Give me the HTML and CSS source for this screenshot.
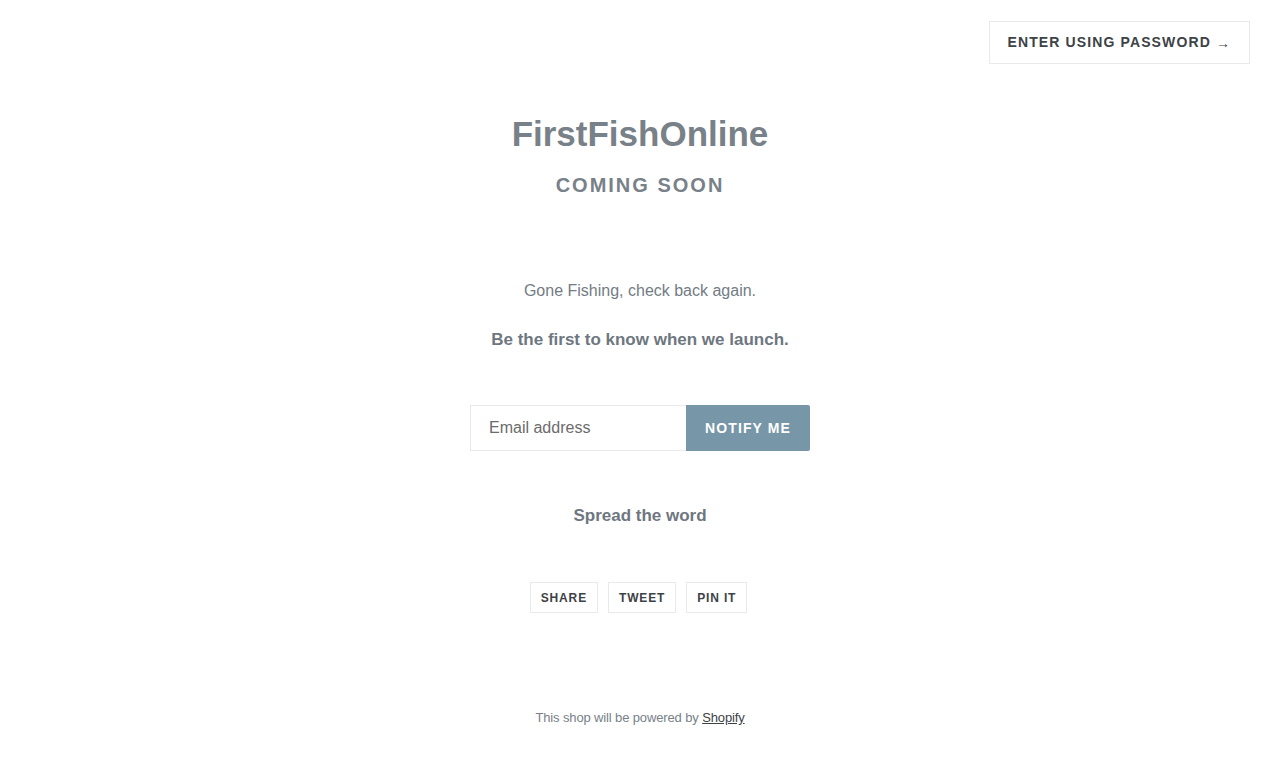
FILE: index.html
```html
<!DOCTYPE html>
<html lang="en">
<head>
<meta charset="utf-8">
<title>FirstFishOnline</title>
<link rel="stylesheet" href="styles.css">
</head>
<body>
<header class="top">
  <a class="pw-btn" href="#">Enter using password <span class="arrow">&rarr;</span></a>
</header>
<main class="main">
  <h1 class="title">FirstFishOnline</h1>
  <h2 class="soon">Coming Soon</h2>
  <p class="msg">Gone Fishing, check back again.</p>
  <p class="launch">Be the first to know when we launch.</p>
  <form class="signup">
    <input class="email" type="email" placeholder="Email address">
    <button class="notify" type="button">Notify me</button>
  </form>
  <p class="spread">Spread the word</p>
  <div class="share">
    <a class="share-btn" href="#">Share</a>
    <a class="share-btn" href="#">Tweet</a>
    <a class="share-btn" href="#">Pin it</a>
  </div>
</main>
<footer class="foot">This shop will be powered by <a href="#">Shopify</a></footer>
</body>
</html>
```
FILE: styles.css
```css
* { box-sizing: border-box; }
html, body { margin: 0; padding: 0; }
body {
  font-family: "Liberation Sans", Arial, sans-serif;
  color: #737c84;
  background: #fff;
  text-align: center;
}
.top {
  display: flex;
  justify-content: flex-end;
  padding: 21px 30px 0 0;
}
.pw-btn {
  display: inline-flex;
  align-items: center;
  height: 43px;
  padding: 0 18px;
  border: 1px solid #e8e9eb;
  color: #3d4246;
  text-decoration: none;
  font-weight: 700;
  font-size: 14px;
  line-height: 16px;
  padding-bottom: 1px;
  letter-spacing: 0.08em;
  text-transform: uppercase;
}
.arrow { margin-left: 5px; font-weight: 400; font-size: 14px; position: relative; top: 1px; }
.main {
  display: flex;
  flex-direction: column;
  align-items: center;
}
.title {
  margin: 50px 0 0;
  font-size: 35px;
  line-height: 40px;
  font-weight: 700;
  color: #788188;
}
.soon {
  margin: 19px 0 0;
  font-size: 20px;
  line-height: 24px;
  letter-spacing: 0.1em;
  text-transform: uppercase;
  font-weight: 700;
  color: #788188;
}
.msg {
  margin: 82px 0 0;
  font-size: 16px;
  line-height: 24px;
}
.launch {
  margin: 25px 0 0;
  font-size: 17px;
  line-height: 24px;
  font-weight: 700;
  color: #6e777f;
}
.signup {
  display: flex;
  margin: 53px 0 0;
}
.email {
  width: 216px;
  height: 46px;
  border: 1px solid #e8e9eb;
  border-right: 0;
  padding: 0 18px;
  font-family: inherit;
  font-size: 16px;
  color: #3d4246;
  outline: none;
}
.email::placeholder { color: #6b6b6b; }
.notify {
  width: 124px;
  height: 46px;
  border: 0;
  border-radius: 0 2px 2px 0;
  background: #7796a8;
  color: #fff;
  font-family: inherit;
  font-weight: 700;
  font-size: 14px;
  letter-spacing: 0.08em;
  text-transform: uppercase;
}
.spread {
  margin: 53px 0 0;
  font-size: 17px;
  line-height: 24px;
  font-weight: 700;
  color: #6e777f;
}
.share {
  display: flex;
  gap: 10px;
  margin: 54px 0 0;
  padding-right: 3px;
}
.share-btn {
  display: inline-flex;
  align-items: center;
  height: 31px;
  padding: 0 10px;
  border: 1px solid #e8e9eb;
  color: #3d4246;
  text-decoration: none;
  font-weight: 700;
  font-size: 12px;
  letter-spacing: 0.07em;
  text-transform: uppercase;
}
.foot {
  margin-top: 95px;
  font-size: 13px;
  line-height: 20px;
  letter-spacing: -0.01em;
  color: #788188;
}
.foot a { color: #3d4246; }
```
